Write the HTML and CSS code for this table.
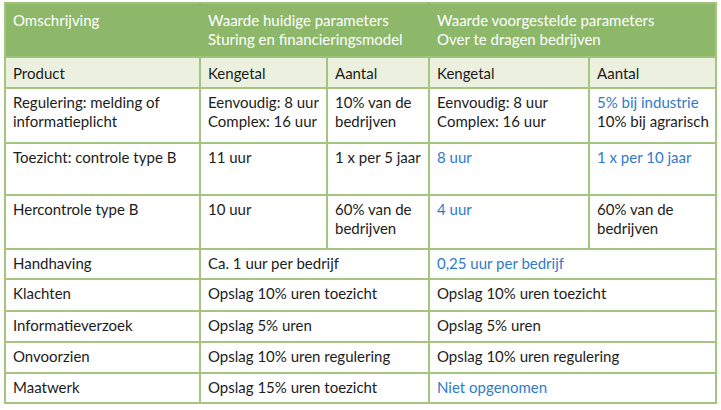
FILE: index.html
```html
<!DOCTYPE html>
<html>
<head>
<meta charset="utf-8">
<link rel="stylesheet" href="styles.css">
</head>
<body>
<table class="params">
  <colgroup>
    <col class="c1"><col class="c2"><col class="c3"><col class="c4"><col class="c5">
  </colgroup>
  <thead>
    <tr class="head">
      <th>Omschrijving</th>
      <th colspan="2">Waarde huidige parameters<br>Sturing en financieringsmodel</th>
      <th colspan="2">Waarde voorgestelde parameters<br>Over te dragen bedrijven</th>
    </tr>
    <tr class="sub">
      <td>Product</td><td>Kengetal</td><td>Aantal</td><td>Kengetal</td><td>Aantal</td>
    </tr>
  </thead>
  <tbody>
    <tr class="r-reg">
      <td>Regulering: melding of<br>informatieplicht</td>
      <td>Eenvoudig: 8 uur<br>Complex: 16 uur</td>
      <td>10% van de<br>bedrijven</td>
      <td>Eenvoudig: 8 uur<br>Complex: 16 uur</td>
      <td><span class="new">5% bij industrie</span><br>10% bij agrarisch</td>
    </tr>
    <tr class="r-toe">
      <td>Toezicht: controle type B</td>
      <td>11 uur</td>
      <td>1 x per 5 jaar</td>
      <td class="new">8 uur</td>
      <td class="new">1 x per 10 jaar</td>
    </tr>
    <tr class="r-her">
      <td>Hercontrole type B</td>
      <td>10 uur</td>
      <td>60% van de<br>bedrijven</td>
      <td class="new">4 uur</td>
      <td>60% van de<br>bedrijven</td>
    </tr>
    <tr class="r-hand">
      <td>Handhaving</td>
      <td colspan="2">Ca. 1 uur per bedrijf</td>
      <td colspan="2" class="new">0,25 uur per bedrijf</td>
    </tr>
    <tr class="r-kla">
      <td>Klachten</td>
      <td colspan="2">Opslag 10% uren toezicht</td>
      <td colspan="2">Opslag 10% uren toezicht</td>
    </tr>
    <tr class="r-inf">
      <td>Informatieverzoek</td>
      <td colspan="2">Opslag 5% uren</td>
      <td colspan="2">Opslag 5% uren</td>
    </tr>
    <tr class="r-onv">
      <td>Onvoorzien</td>
      <td colspan="2">Opslag 10% uren regulering</td>
      <td colspan="2">Opslag 10% uren regulering</td>
    </tr>
    <tr class="r-maa">
      <td>Maatwerk</td>
      <td colspan="2">Opslag 15% uren toezicht</td>
      <td colspan="2" class="new">Niet opgenomen</td>
    </tr>
  </tbody>
</table>
</body>
</html>
```
FILE: styles.css
```css
html, body {
  margin: 0;
  padding: 0;
  background: #ffffff;
}

.params {
  margin: 2px 0 0 4px;
  border-collapse: collapse;
  table-layout: fixed;
  width: 713px;
  font-family: Lato, "Open Sans", sans-serif;
  font-size: 15px;
  line-height: 19px;
  color: #1c1c1c;
}

.c1 { width: 195px; }
.c2 { width: 127px; }
.c3 { width: 102px; }
.c4 { width: 160px; }
.c5 { width: 127px; }

.params td,
.params th {
  box-sizing: border-box;
  border: 2px solid #a3c57f;
  padding: 4px 0 0 7px;
  vertical-align: top;
  text-align: left;
  font-weight: normal;
  white-space: nowrap;
}

.head th {
  background: #8db86a;
  color: #ffffff;
  border-color: #9ec47a;
  border-left-color: #8db86a;
  border-right-color: #8db86a;
  height: 54px;
  padding-top: 7px;
}

.head th:first-child { border-left-color: #a3c57f; }
.head th:last-child { border-right-color: #a3c57f; }

.sub td {
  background: #ebf1de;
  height: 31px;
  padding-top: 6px;
}

.r-reg td { height: 55px; }
.r-toe td { height: 52px; }
.r-her td { height: 54px; }
.r-hand td { height: 30px; }
.r-kla td { height: 32px; }
.r-inf td { height: 31px; }
.r-onv td { height: 31px; }
.r-maa td { height: 30px; }

.new { color: #2f7bc9; }
```
